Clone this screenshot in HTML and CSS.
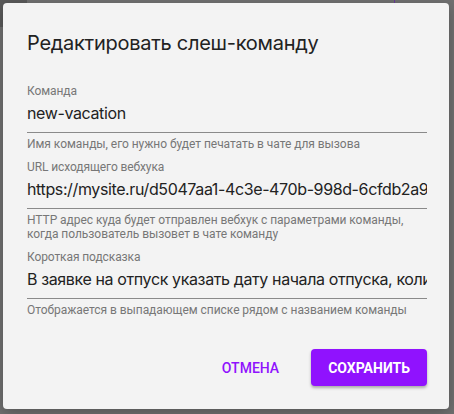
FILE: index.html
```html
<!DOCTYPE html>
<html lang="ru">
<head>
<meta charset="utf-8">
<title>Редактировать слеш-команду</title>
<link rel="stylesheet" href="styles.css">
</head>
<body>
<div class="backdrop">
  <div class="bg-corner"></div>
  <div class="bg-line"></div>
  <div class="dialog">
    <h1 class="title">Редактировать слеш-команду</h1>
    <div class="fields">
      <div class="field">
        <label class="label">Команда</label>
        <input class="input" type="text" value="new-vacation" readonly>
        <div class="helper">Имя команды, его нужно будет печатать в чате для вызова</div>
      </div>
      <div class="field">
        <label class="label">URL исходящего вебхука</label>
        <input class="input" type="text" value="https://mysite.ru/d5047aa1-4c3e-470b-998d-6cfdb2a9f1e2" readonly>
        <div class="helper">HTTP адрес куда будет отправлен вебхук с параметрами команды, когда пользователь вызовет в чате команду</div>
      </div>
      <div class="field">
        <label class="label">Короткая подсказка</label>
        <input class="input" type="text" value="В заявке на отпуск указать дату начала отпуска, количество дней" readonly>
        <div class="helper">Отображается в выпадающем списке рядом с названием команды</div>
      </div>
    </div>
    <div class="actions">
      <button class="btn btn-text">Отмена</button>
      <button class="btn btn-primary">Сохранить</button>
    </div>
  </div>
</div>
</body>
</html>
```
FILE: styles.css
```css
* { box-sizing: border-box; }
html, body { margin: 0; padding: 0; }
body {
  background: #707070;
  width: 454px;
  height: 414px;
  overflow: hidden;
  font-family: Roboto, "Noto Sans", sans-serif;
}
.backdrop {
  position: relative;
  padding: 3px;
  height: 414px;
}
.bg-corner {
  position: absolute;
  left: 0;
  top: 0;
  width: 27px;
  height: 27px;
  background: #5a5a5a;
}
.bg-line {
  position: absolute;
  left: 394px;
  top: 0;
  width: 1px;
  height: 4px;
  background: #6a3c9a;
}
.dialog {
  position: relative;
  width: 446px;
  height: 406px;
  background: #f3f3f3;
  border-radius: 4px;
  padding: 26px 22px 23px 24px;
  display: flex;
  flex-direction: column;
  box-shadow: 0 4px 14px rgba(0,0,0,0.25);
}
.title {
  margin: 0;
  font-family: Inter, Roboto, sans-serif;
  font-weight: 400;
  font-size: 20px;
  line-height: 28px;
  color: #222;
  letter-spacing: -0.27px;
}
.fields {
  margin-top: 26px;
  display: flex;
  flex-direction: column;
  gap: 8px;
}
.field {
  display: flex;
  flex-direction: column;
}
.label {
  font-size: 12px;
  line-height: 16px;
  color: #777;
  letter-spacing: -0.1px;
}
.input {
  display: block;
  width: 100%;
  border: none;
  border-bottom: 1px solid #8a8a8a;
  background: transparent;
  padding: 4px 0 9px 0;
  margin: 0;
  height: 34px;
  font-family: Inter, Roboto, sans-serif;
  font-size: 16px;
  line-height: 20px;
  color: #222;
  letter-spacing: -0.38px;
  outline: none;
}
.helper {
  margin-top: 4px;
  font-size: 12px;
  line-height: 14px;
  color: #777;
  letter-spacing: -0.05px;
}
.actions {
  margin-top: auto;
  display: flex;
  justify-content: flex-end;
  gap: 16px;
}
.btn {
  height: 37px;
  padding: 0 16px;
  border: none;
  border-radius: 4px;
  font-family: Roboto, sans-serif;
  font-weight: 500;
  font-size: 14px;
  text-transform: uppercase;
  cursor: pointer;
}
.btn-text {
  background: transparent;
  color: #9012fe;
}
.btn-primary {
  padding: 0 17px;
  background: #9012fe;
  color: #fff;
  font-weight: 700;
  box-shadow: 0 2px 3px rgba(0,0,0,0.3);
}
```
